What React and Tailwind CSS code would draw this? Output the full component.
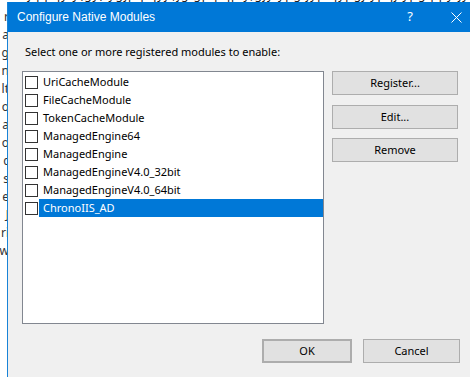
import React from 'react';

const modules = [
  'UriCacheModule',
  'FileCacheModule',
  'TokenCacheModule',
  'ManagedEngine64',
  'ManagedEngine',
  'ManagedEngineV4.0_32bit',
  'ManagedEngineV4.0_64bit',
  'ChronoIIS_AD',
];

// bits of the document behind the dialog
const edgeChars = ['r', 'a', 'g', 'n', 'lt', 'o', 'a', 'o', 'c', 's', 'e', 'J', 'ri', 'w'];

const WinButton = ({ children, className = '' }) => (
  <button
    className={`flex items-center justify-center h-6 bg-[#e1e1e1] border border-[#adadad] text-[11px] text-black ${className}`}
  >
    {children}
  </button>
);

const ModuleRow = ({ name, selected }) => (
  <div className="flex items-center h-[18px]">
    <span className="ml-[2px] mr-[1px] w-[13px] h-[13px] border border-[#333333] bg-white shrink-0" />
    <span
      className={`flex-1 h-[18px] flex items-center pl-1 text-[11px] ${
        selected ? 'bg-[#0078d7] text-white' : 'text-black'
      }`}
    >
      {name}
    </span>
  </div>
);

export default function App() {
  return (
    <div
      className="w-[470px] h-[377px] bg-white overflow-hidden flex flex-col"
      style={{ fontFamily: '"Segoe UI", "Noto Sans", "Open Sans", sans-serif' }}
    >
      {/* top edge of background page */}
      <div className="h-[2px] overflow-hidden text-[12px] leading-[14px] text-[#222] whitespace-nowrap">
        <div className="-mt-[12px] pl-[6px] tracking-[1px]">
          ranjq pqy y(gy) ygjp pqyj ;jg gp pqp y,gjy ypg jyp qypgj ypqj ypg ppy jy yq y gpj
        </div>
      </div>
      <div className="flex flex-1 min-h-0">
        <div className="w-[7px] shrink-0 overflow-hidden flex flex-col items-end pt-[6px] text-[12px] leading-[18px] text-[#333]">
          {edgeChars.map((c, i) => (
            <div key={i} className="whitespace-nowrap -mr-[2px]">
              {c}
            </div>
          ))}
        </div>
        <div className="flex-1 flex flex-col border-l border-[#1883d7] min-w-0">
          {/* title bar */}
          <div className="h-[30px] bg-[#0078d7] flex items-center text-white shrink-0">
            <span className="ml-[9px] text-[12px] font-['Liberation_Sans',Arial,sans-serif]">
              Configure Native Modules
            </span>
            <span className="ml-auto mr-[38px] text-[13px]">?</span>
            <svg width="11" height="11" viewBox="0 0 11 11" className="mr-[8px]">
              <path d="M0.5 0.5L10.5 10.5M10.5 0.5L0.5 10.5" stroke="white" strokeWidth="1" />
            </svg>
          </div>

          {/* body */}
          <div className="flex-1 bg-[#f0f0f0] flex flex-col pl-[14px] pr-[10px] pt-[12px]">
            <div className="pl-[3px] text-[11px] leading-[16px] text-black">
              Select one or more registered modules to enable:
            </div>
            <div className="flex mt-[11px]">
              <div className="w-[302px] h-[253px] bg-white border border-[#828790] pt-[1px] flex flex-col">
                {modules.map((m, i) => (
                  <ModuleRow key={m} name={m} selected={i === modules.length - 1} />
                ))}
              </div>
              <div className="ml-[8px] flex flex-col">
                <WinButton className="w-[126px]">Register...</WinButton>
                <WinButton className="w-[126px] mt-[10px]">Edit...</WinButton>
                <WinButton className="w-[126px] mt-[9px]">Remove</WinButton>
              </div>
            </div>
            <div className="flex justify-end mt-[15px]">
              <WinButton className="w-[90px] border-2 border-[#0078d7]">OK</WinButton>
              <WinButton className="w-[97px] ml-[11px]">Cancel</WinButton>
            </div>
          </div>
        </div>
      </div>
    </div>
  );
}
